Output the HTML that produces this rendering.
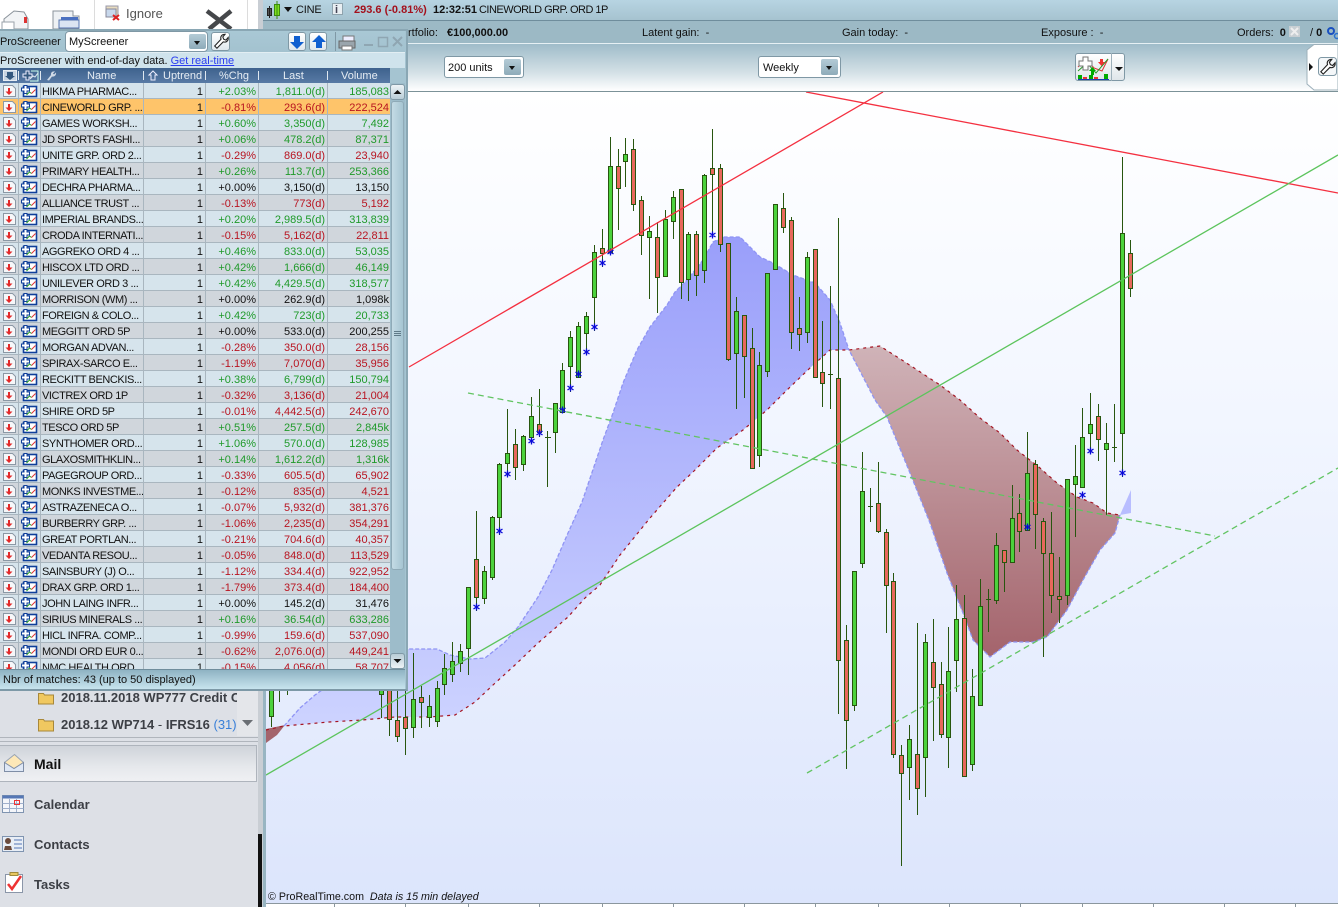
<!DOCTYPE html>
<html><head><meta charset="utf-8"><title>ProScreener</title>
<style>
*{box-sizing:border-box}
html,body{margin:0;padding:0}
body{width:1338px;height:907px;position:relative;overflow:hidden;background:#dde0e6;font:11px "Liberation Sans",sans-serif;color:#111}
.a{position:absolute}
.t{position:absolute;white-space:nowrap;line-height:14px}
.o{font-weight:bold;font-size:13px;color:#3c3f45;line-height:16px}
.sel{position:absolute;background:#fff;border:1px solid #7f98a5;border-radius:3px}
.sb{position:absolute;top:2px;bottom:2px;right:2px;width:17px;border-radius:2px;background:linear-gradient(#b4cbd6,#8eabb9)}
.sb:after{content:"";position:absolute;left:5px;top:7px;border:3.5px solid transparent;border-top:4px solid #111;border-bottom:0}
.btn{position:absolute;background:linear-gradient(#fff,#dfe8ee);border:1px solid #7f98a5;border-radius:3px}
#rows{position:absolute;left:0;top:83px;width:390px;height:586px;overflow:hidden;font-size:11px}
.r{height:16px;padding-left:41px;display:grid;grid-template-columns:103px 62px 53px 69px 62px;background:#d6e4ec;border-bottom:1px solid #a9b6bf;line-height:16px}
.r.k{background:#d0d6dc}
.r.c{background:#fec46a}
.r span{border-right:1px solid #a9b6bf;text-align:right;padding:1px 2px 0 0;white-space:nowrap;overflow:hidden}
.r span:first-child{text-align:left;padding:1px 0 0 1px;letter-spacing:-.42px}
.r span:last-child{border:0;padding:1px 1px 0 0}
.g span:nth-child(n+3){color:#1f9a2a}
.e span:nth-child(n+3){color:#b81420}
.n span:nth-child(n+3){color:#111}
</style></head>
<body>
<svg width="0" height="0" style="position:absolute"><defs>
<symbol id="wr" viewBox="0 0 20 20"><path d="M3 15.500l7-7.500c-1-3 1-5.500 4.500-5.500l-2.500 3 1 2.500 2.500 1 2.500-3c.5 3.500-2 6-5.500 5l-7 7z" fill="#fff" stroke="#222" stroke-width="1.200"/></symbol>
</defs></svg>

<!-- Outlook ribbon -->
<div class="a" style="left:0;top:0;width:258px;height:30px;background:#fff"></div>
<div class="a" style="left:94px;top:0;width:1px;height:30px;background:#dcdcdc"></div>
<div class="a" style="left:247px;top:0;width:1px;height:30px;background:#dcdcdc"></div>
<svg class="a" style="left:0;top:0" width="258" height="30">
<path d="M4 29V19l10-8 10 1 4 7v10z" fill="#f2f4f6" stroke="#8b939b"/><path d="M2 22h12v8H2z" fill="#fff" stroke="#9aa2aa"/><path d="M24 17h3v6h-3z" fill="#d33"/>
<path d="M53 29V11h20v5h6v13z" fill="#eef1f4" stroke="#8b939b"/><path d="M59 20h20v8H59z" fill="#dbe4f2" stroke="#5575b0"/><path d="M61 17h17v3H61z" fill="#4a70c0"/>
<path d="M106 6h12v10h-12z" fill="#e8dcc0" stroke="#99a"/><path d="M106 9h10v8h-10z" fill="#c8d8ec" stroke="#889"/><path d="M113 15l6 5M119 15l-6 5" stroke="#d22" stroke-width="2"/>
<path d="M207 11l24 18M231 11l-22 18" stroke="#45474a" stroke-width="4.500"/>
</svg>
<div class="t" style="left:126px;top:7px;font-size:13px;color:#555">Ignore</div>

<!-- Outlook lower left -->
<div class="a" style="left:0;top:690px;width:258px;height:217px;background:#dde0e6"></div>
<div class="a" style="left:237px;top:690px;width:21px;height:46px;background:#e4e6ea"></div>
<svg class="a" style="left:0;top:690px" width="258" height="217">
<path d="M38.500 3.500h5l1 1.500h9v9h-15z" fill="#f0c860" stroke="#a8883a"/>
<path d="M38.500 29.500h5l1 1.500h9v10h-15z" fill="#f0c860" stroke="#a8883a"/>
<path d="M242 30h11l-5.500 6z" fill="#6a6e74"/>
<path d="M0 47.500h258M0 51.500h258" stroke="#b0b5bc"/>
</svg>
<div class="t o" style="left:61px;top:690px;width:176px;overflow:hidden">2018.11.2018 WP777 Credit C</div>
<div class="t o" style="left:61px;top:717px">2018.12 WP714 <span style="font-weight:normal">-</span> IFRS16 <span style="color:#3a80d8;font-weight:normal">(31)</span></div>
<div class="a" style="left:0;top:745px;width:257px;height:37px;border:1px solid #aeb4bc;border-left:0;background:linear-gradient(#cfd3da,#e6e8ec 60%,#eff0f3)"></div>
<svg class="a" style="left:0;top:750px" width="30" height="150">
<path d="M4.500 12.500l10-8 9 8v9h-19z" fill="#fde8b8" stroke="#98a4b4"/><path d="M4.500 12.500l9.500 6 9.500-6v9h-19z" fill="#dfe8f6" stroke="#7f8ea6"/>
<path d="M2.500 45.500h21v17h-21z" fill="#f4f6fa" stroke="#7f94b0"/><path d="M2.500 45.500h21v3h-21z" fill="#5577b5"/><path d="M2.500 53.500h21M2.500 58.500h21M9.500 49v13M16.500 49v13" stroke="#a0b0cc"/><path d="M14.500 50.500h5v4h-5z" fill="none" stroke="#e33"/>
<path d="M2.500 86.500h21v15h-21z" fill="#e8eef6" stroke="#7f94b0"/><path d="M5 91a3 3 0 1 1 6 0a3 3 0 0 1-6 0zM4 100l1-4h6l1 4z" fill="#6a4a3c"/><path d="M14 90h8M14 94h8M14 98h8" stroke="#5577b5"/>
<path d="M5.500 124.500h17v18h-17z" fill="#fff" stroke="#8a96a8"/><path d="M10 122.500h8v3h-8z" fill="#e8c860" stroke="#a08a3a"/><path d="M8 134l4 5 9-13" fill="none" stroke="#e33" stroke-width="2.500"/>
</svg>
<div class="t o" style="left:34px;top:756px;color:#111;font-size:14px">Mail</div>
<div class="t o" style="left:34px;top:797px">Calendar</div>
<div class="t o" style="left:34px;top:837px">Contacts</div>
<div class="t o" style="left:34px;top:877px">Tasks</div>
<div class="a" style="left:258px;top:0;width:5px;height:907px;background:#c9ced4"></div>
<div class="a" style="left:258px;top:834px;width:4px;height:73px;background:#111"></div>

<!-- PRT window bars -->
<div class="a" style="left:263px;top:0;width:1075px;height:21px;background:linear-gradient(#b7d4e2,#a6c3d0);border-bottom:1px solid #6f8d9c"></div>
<div class="a" style="left:263px;top:21px;width:1075px;height:23px;background:#9cb9c5;border-bottom:1px solid #e6f0f4"></div>
<div class="a" style="left:263px;top:44px;width:1075px;height:48px;background:linear-gradient(#9fbcc9,#d3e0e6 60%,#fff);border-bottom:1px solid #7c9298"></div>
<svg class="a" style="left:263px;top:0" width="80" height="20">
<path d="M4.500 8.500h4v7h-4zM6.500 6v12" fill="#555" stroke="#222"/><path d="M11.500 4.500h5v11h-5zM14 1v18" fill="#7ee020" stroke="#3c8a10"/><path d="M21 7h8l-4 5z" fill="#111"/>
<rect x="69.500" y="3.500" width="10" height="11" fill="#e8eef2" stroke="#8fa3ad"/>
</svg>
<div class="t" style="left:296px;top:3px;font-size:11px;letter-spacing:-.2px">CINE</div>
<div class="t" style="left:335px;top:3px;font-size:11px;font-weight:bold;color:#445">i</div>
<div class="t" style="left:354px;top:3px;font-size:11px;font-weight:bold;color:#a3101c">293.6 (-0.81%)</div>
<div class="t" style="left:433px;top:3px;font-size:11px;font-weight:bold">12:32:51</div>
<div class="t" style="left:479px;top:3px;font-size:11px;letter-spacing:-.52px">CINEWORLD GRP. ORD 1P</div>
<div class="t" style="left:408px;top:26px;font-size:11px">rtfolio:</div>
<div class="t" style="left:447px;top:26px;font-size:11px;font-weight:bold">€100,000.00</div>
<div class="t" style="left:642px;top:26px;font-size:11px">Latent gain:&nbsp; -</div>
<div class="t" style="left:842px;top:26px;font-size:11px">Gain today:&nbsp; -</div>
<div class="t" style="left:1041px;top:26px;font-size:11px">Exposure :&nbsp; -</div>
<div class="t" style="left:1237px;top:26px;font-size:11px">Orders:&nbsp; <b>0</b></div>
<div class="t" style="left:1310px;top:26px;font-size:11px">/ <b>0</b></div>
<svg class="a" style="left:1288px;top:24px" width="50" height="18">
<rect x="1" y="2" width="11" height="11" fill="#c8cfd3"/><path d="M3 4l7 7M10 4l-7 7" stroke="#eee" stroke-width="2"/>
<circle cx="43" cy="7" r="3" fill="none" stroke="#1a50c0" stroke-width="2"/><circle cx="49" cy="12" r="2.500" fill="none" stroke="#2a70d0" stroke-width="1.500"/>
</svg>

<div class="sel" style="left:444px;top:56px;width:80px;height:22px"><div class="sb"></div></div>
<div class="t" style="left:448px;top:61px;font-size:11px">200 units</div>
<div class="sel" style="left:758px;top:56px;width:83px;height:22px"><div class="sb"></div></div>
<div class="t" style="left:763px;top:61px;font-size:11px">Weekly</div>
<div class="sel" style="left:1075px;top:53px;width:50px;height:28px;background:linear-gradient(#fff,#dfe6ea)"></div>
<svg class="a" style="left:1075px;top:53px" width="50" height="28">
<path d="M36.500 0v28" stroke="#9db0ba"/><path d="M40 14h8l-4 4z" fill="#111"/>
<path d="M3 14l8-8 8 9 8 3 6-12" fill="none" stroke="#d33" stroke-width="1"/><path d="M3 18l9-8 9 10 12-14" fill="none" stroke="#2a9a2a" stroke-width="1"/>
<path d="M4 8h4V4h5v4h4v5h-4v4H8v-4H4z" fill="#fff" stroke="#777"/>
<path d="M25 6h3v3h2l-3.500 4L23 9h2z" fill="#e33"/><path d="M14 18l3.500-4 3.500 4h-2v4h-3v-4z" fill="#0a0"/>
<path d="M3 22h4v4H3zM14 22h4v4h-4zM29 21h4v5h-4z" fill="#0a0"/><path d="M8 24h4v2H8zM19 24h4v2h-4z" fill="#e33"/><path d="M3 26.500h31" stroke="#1a3fb0"/>
</svg>
<svg class="a" style="left:1304px;top:44px" width="34" height="47">
<path d="M34 .5H10L3 6v34l7 6h24z" fill="#fff" stroke="#9db0ba"/><path d="M5 19l4 4-4 4z" fill="#111"/>
<rect x="14.500" y="13.500" width="18" height="18" rx="3" fill="#f4f7f9" stroke="#7f98a5"/><use href="#wr" x="14" y="13" width="19" height="19"/>
</svg>

<!-- Chart -->
<svg class="a" style="left:0;top:0" width="1338" height="907">
<defs>
<linearGradient id="bg" x1="0" y1="92" x2="0" y2="903" gradientUnits="userSpaceOnUse"><stop offset="0" stop-color="#fff"/><stop offset=".4" stop-color="#f2f6ff"/><stop offset="1" stop-color="#dce5fc"/></linearGradient>
<linearGradient id="bl" x1="0" y1="240" x2="0" y2="720" gradientUnits="userSpaceOnUse"><stop offset="0" stop-color="#9a9ffa"/><stop offset="1" stop-color="#ccd2ff"/></linearGradient>
<linearGradient id="rd" x1="0" y1="350" x2="0" y2="655" gradientUnits="userSpaceOnUse"><stop offset="0" stop-color="#cfb2b7"/><stop offset="1" stop-color="#a4646c"/></linearGradient>
<clipPath id="cp"><rect x="266" y="92" width="1072" height="811"/></clipPath>
</defs>
<rect x="263" y="92" width="1075" height="815" fill="#fff"/>
<rect x="266" y="92" width="1072" height="811" fill="url(#bg)"/>
<rect x="263" y="92" width="3" height="815" fill="#98b5c2"/>
<path d="M334.500 903v4M405.500 903v4M468.500 903v4M539.500 903v4M602.500 903v4M673.500 903v4M744.500 903v4M815.500 903v4M878.500 903v4M949.500 903v4M1020.500 903v4M1082.500 903v4M1153.500 903v4M1224.500 903v4M1295.500 903v4M266 903.500h1072" stroke="#8b979e" fill="none"/>
<g clip-path="url(#cp)">
<path d="M284 726L300 708 315 695 350 670 405 649 437 649 450 655 470 659 485 658 505 642 518 627 538 597 552 570 568 533 582 502 603 440 613 413 623 383 637 350 650 327 667 305 675 292 687 280 703 260 713 242 723 237 740 237 750 247 760 257 773 263 793 275 815 283 830 300 840 323 849 350 830 350 810 368 787 390 767 410 743 430 717 448 693 472 677 487 650 518 620 555 600 585 585 598 568 617 538 643 515 665 493 685 475 702 455 715 429 717 395 717 362 720 329 722z" fill="url(#bl)"/>
<path d="M849 350L880 346 905 362 940 385 960 400 980 418 1000 433 1017 450 1040 468 1057 483 1077 497 1093 503 1107 513 1120 515 1115 533 1100 550 1083 580 1067 610 1047 637 1033 642 1010 642 990 657 973 640 963 613 947 573 930 523 910 473 887 417 875 400z" fill="url(#rd)"/>
<path d="M1120 515L1131 490V513z" fill="#b8bdff"/>
<path d="M266 729L285 725 277 735 266 743z" fill="#a4646c"/>
<path d="M284 726L300 708 315 695 350 670 405 649 437 649 450 655 470 659 485 658 505 642 518 627 538 597 552 570 568 533 582 502 603 440 613 413 623 383 637 350 650 327 667 305 675 292 687 280 703 260 713 242 723 237 740 237 750 247 760 257 773 263 793 275 815 283 830 300 840 323 849 350M1120 515L1115 533 1100 550 1083 580 1067 610 1047 637 1033 642 1010 642 990 657 973 640 963 613 947 573 930 523 910 473 887 417 875 400 849 350" fill="none" stroke="#8f94f4" stroke-width="1.300" stroke-dasharray="4 2"/>
<path d="M266 730L284 726 329 722 362 720 395 717 429 717 455 715 475 702 493 685 515 665 538 643 568 617 585 598 600 585 620 555 650 518 677 487 693 472 717 448 743 430 767 410 787 390 810 368 830 350 849 350 880 346 905 362 940 385 960 400 980 418 1000 433 1017 450 1040 468 1057 483 1077 497 1093 503 1107 513 1120 515" fill="none" stroke="#a51422" stroke-width="1.200" stroke-dasharray="3 4"/>
<path stroke="#28560f" fill="none" d="M271.500 680V727M279.500 680V702M287.500 680V695M381.500 680V718M389.500 680V736M397.500 690V742M405.500 653V755M413.500 653V738M421.500 686V728M429.500 695V727M437.500 681V727M444.500 654V695M452.500 642V682M460.500 644V672M468.500 587V675M476.500 511V611M484.500 566V604M492.500 516V580M499.500 463V535M507.500 409V473M515.500 429V480M523.500 435V471M531.500 397V444M539.500 389V437M547.500 431V487M555.500 403V453M562.500 363V413M570.500 331V392M578.500 322V377M586.500 312V355M594.500 245V331M602.500 229V267M610.500 137V255M618.500 149V230M625.500 138V187M633.500 139V211M641.500 196V255M649.500 216V299M657.500 222V313M665.500 210V276M673.500 191V239M681.500 189V299M688.500 232V301M696.500 231V296M704.500 174V283M712.500 129V238M720.500 164V252M728.500 243V361M736.500 297V409M744.500 315V398M752.500 328V468M759.500 352V467M767.500 273V377M775.500 204V269M783.500 193V233M791.500 217V349M799.500 297V351M807.500 252V343M815.500 249V378M822.500 321V407M830.500 286V409M838.500 218V714M846.500 625V769M854.500 571V711M862.500 452V568M870.500 488V522M878.500 462V533M886.500 529V633M893.500 573V758M901.500 745V866M909.500 725V800M917.500 623V815M925.500 634V797M933.500 619V741M941.500 662V738M948.500 627V768M956.500 585V692M964.500 595V776M972.500 669V771M980.500 579V705M988.500 589V632M996.500 533V604M1004.500 550V592M1012.500 485V562M1019.500 494V552M1027.500 432V530M1035.500 460V549M1043.500 518V657M1051.500 512V613M1059.500 557V623M1067.500 479V605M1075.500 445V537M1082.500 408V487M1090.500 393V454M1098.500 404V461M1106.500 423V515M1114.500 404V462M1122.500 157V477M1130.500 240V297M545 437.500h6M828 374.500h5M868 506.500h5M986 599.500h5M1112 447.500h5"/>
<path stroke="#28560f" fill="#4cd23c" d="M269.500 680.500h4V716.500h-4zM379.500 680.500h4V694.500h-4zM411.500 699.500h4V727.500h-4zM427.500 706.500h4V717.500h-4zM435.500 688.500h4V721.500h-4zM442.500 668.500h4V684.500h-4zM450.500 661.500h4V674.500h-4zM458.500 651.500h4V663.500h-4zM466.500 587.500h4V648.500h-4zM482.500 571.500h4V598.500h-4zM490.500 517.500h4V577.500h-4zM497.500 464.500h4V517.500h-4zM505.500 453.500h4V463.500h-4zM521.500 436.500h4V464.500h-4zM529.500 416.500h4V437.500h-4zM553.500 403.500h4V432.500h-4zM560.500 370.500h4V412.500h-4zM568.500 337.500h4V366.500h-4zM576.500 326.500h4V377.500h-4zM584.500 316.500h4V333.500h-4zM592.500 252.500h4V297.500h-4zM608.500 166.500h4V252.500h-4zM623.500 154.500h4V161.500h-4zM647.500 231.500h4V237.500h-4zM663.500 219.500h4V276.500h-4zM671.500 197.500h4V221.500h-4zM686.500 234.500h4V279.500h-4zM702.500 175.500h4V270.500h-4zM734.500 311.500h4V353.500h-4zM757.500 365.500h4V455.500h-4zM765.500 273.500h4V371.500h-4zM773.500 204.500h4V269.500h-4zM805.500 257.500h4V332.500h-4zM852.500 571.500h4V705.500h-4zM860.500 491.500h4V563.500h-4zM907.500 739.500h4V767.500h-4zM923.500 642.500h4V757.500h-4zM946.500 671.500h4V737.500h-4zM954.500 619.500h4V660.500h-4zM970.500 696.500h4V764.500h-4zM978.500 606.500h4V705.500h-4zM994.500 545.500h4V600.500h-4zM1010.500 518.500h4V562.500h-4zM1025.500 473.500h4V530.500h-4zM1065.500 479.500h4V595.500h-4zM1073.500 476.500h4V484.500h-4zM1080.500 437.500h4V487.500h-4zM1088.500 424.500h4V433.500h-4zM1104.500 443.500h4V449.500h-4zM1120.500 233.500h4V433.500h-4z"/>
<path stroke="#28560f" fill="#e8685c" d="M387.500 680.500h4V719.500h-4zM395.500 720.500h4V736.500h-4zM403.500 717.500h4V728.500h-4zM419.500 697.500h4V702.500h-4zM474.500 559.500h4V597.500h-4zM513.500 444.500h4V467.500h-4zM537.500 424.500h4V432.500h-4zM600.500 248.500h4V253.500h-4zM616.500 166.500h4V188.500h-4zM631.500 149.500h4V204.500h-4zM639.500 200.500h4V235.500h-4zM655.500 237.500h4V277.500h-4zM679.500 189.500h4V282.500h-4zM694.500 234.500h4V275.500h-4zM710.500 168.500h4V174.500h-4zM718.500 168.500h4V244.500h-4zM726.500 243.500h4V359.500h-4zM742.500 315.500h4V356.500h-4zM750.500 348.500h4V468.500h-4zM781.500 208.500h4V227.500h-4zM789.500 220.500h4V332.500h-4zM797.500 328.500h4V334.500h-4zM813.500 249.500h4V377.500h-4zM820.500 372.500h4V383.500h-4zM836.500 378.500h4V660.500h-4zM844.500 640.500h4V720.500h-4zM876.500 503.500h4V531.500h-4zM884.500 532.500h4V585.500h-4zM891.500 581.500h4V754.500h-4zM899.500 755.500h4V773.500h-4zM915.500 754.500h4V788.500h-4zM931.500 662.500h4V687.500h-4zM939.500 684.500h4V734.500h-4zM962.500 618.500h4V776.500h-4zM1002.500 550.500h4V562.500h-4zM1017.500 513.500h4V531.500h-4zM1033.500 464.500h4V514.500h-4zM1041.500 521.500h4V553.500h-4zM1049.500 553.500h4V595.500h-4zM1057.500 596.500h4V599.500h-4zM1096.500 416.500h4V439.500h-4zM1128.500 253.500h4V288.500h-4z"/>
<path stroke="#0808d8" stroke-width="1.300" fill="none" d="M507.500 470.500v7M504.500 472l6 4M504.500 476l6-4M531.500 437.500v7M528.500 439l6 4M528.500 443l6-4M539.500 429.500v7M536.500 431l6 4M536.500 435l6-4M562.500 406.500v7M559.500 408l6 4M559.500 412l6-4M570.500 384.500v7M567.500 386l6 4M567.500 390l6-4M578.500 370.500v7M575.500 372l6 4M575.500 376l6-4M586.500 348.500v7M583.500 350l6 4M583.500 354l6-4M594.500 323.500v7M591.500 325l6 4M591.500 329l6-4M602.500 259.500v7M599.500 261l6 4M599.500 265l6-4M610.500 248.500v7M607.500 250l6 4M607.500 254l6-4M712.500 231.500v7M709.500 233l6 4M709.500 237l6-4M476.500 603.500v7M473.500 605l6 4M473.500 609l6-4M499.500 527.500v7M496.500 529l6 4M496.500 533l6-4M1027.500 523.500v7M1024.500 525l6 4M1024.500 529l6-4M1082.500 491.500v7M1079.500 493l6 4M1079.500 497l6-4M1090.500 447.500v7M1087.500 449l6 4M1087.500 453l6-4M1122.500 469.500v7M1119.500 471l6 4M1119.500 475l6-4"/>
<path d="M409 367L883 92M806 92L1338 193" stroke="#f43040" stroke-width="1.300" fill="none"/>
<path d="M266 775L1338 155" stroke="#5cc45c" stroke-width="1.300" fill="none"/>
<path d="M468 393L1215 536M807 773L1338 468" stroke="#62c462" stroke-width="1.300" stroke-dasharray="6 4" fill="none"/>
</g>
</svg>
<div class="t" style="left:268px;top:890px;font-size:10.700px">© ProRealTime.com&nbsp; <i>Data is 15 min delayed</i></div>

<!-- ProScreener panel -->
<div class="a" style="left:0;top:29px;width:408px;height:662px;background:#a5c4d1;border:2px solid #8aa7b4;border-left:0;border-bottom-color:#7d99a7"></div>
<div class="a" style="left:0;top:31px;width:405px;height:21px;background:linear-gradient(#a9c8d5,#a3c2cf)"></div>
<div class="a" style="left:0;top:52px;width:405px;height:1px;background:#e2eef3"></div>
<div class="a" style="left:0;top:53px;width:405px;height:15px;background:#cfe3ec"></div>
<div class="t" style="left:0;top:35px;font-size:11px;letter-spacing:-.1px">ProScreener</div>
<div class="sel" style="left:65px;top:31px;width:143px;height:21px;border-radius:4px"><div class="sb" style="right:1px"></div></div>
<div class="t" style="left:69px;top:35px;font-size:11px">MyScreener</div>
<div class="btn" style="left:211px;top:32px;width:19px;height:19px"></div>
<svg class="a" style="left:212px;top:32px" width="18" height="18"><use href="#wr" width="18" height="18"/></svg>
<div class="btn" style="left:288px;top:32px;width:18px;height:19px"></div>
<div class="btn" style="left:309px;top:32px;width:18px;height:19px"></div>
<svg class="a" style="left:288px;top:32px" width="120" height="20">
<path d="M6 4h6v6h4l-7 7-7-7h4z" fill="#0f5fd0"/><path d="M27 10l-4 0 7-7 7 7h-4v6h-6z" fill="#0f5fd0" transform="translate(1 0)"/>
<path d="M47.500 0v19" stroke="#7f98a5"/>
<path d="M55 4h11v5H55z" fill="#eef" stroke="#777"/><path d="M51 9h16v7H51z" fill="#9aa5ac" stroke="#666"/><path d="M54 14h10v4H54z" fill="#fff" stroke="#777"/>
<path d="M76 13h9" stroke="#8fa6b2" stroke-width="2"/><rect x="90.500" y="5.500" width="9" height="9" fill="none" stroke="#8fa6b2" stroke-width="1.500"/><path d="M105 5l9 9M114 5l-9 9" stroke="#8fa6b2" stroke-width="2"/>
</svg>
<div class="t" style="left:0;top:55px;font-size:11px;line-height:13px">ProScreener with end-of-day data. <span style="color:#2a3cf0;text-decoration:underline">Get real-time</span></div>

<!-- Table header -->
<div class="a" style="left:0;top:68px;width:390px;height:15px;background:linear-gradient(#3e628d,#587aa5)"></div>
<svg class="a" style="left:0;top:68px" width="390" height="15">
<rect x="3.500" y="2.500" width="13" height="10" fill="#c8d4e2" stroke="#e8eef4"/><path d="M7 4h6v4h2l-5 4-5-4h2z" fill="#34587f"/>
<path d="M18.500 3v9M40.500 3v9M143.500 3v9M205.500 3v9M258.500 3v9M327.500 3v9" stroke="#dfe8f0"/>
<path d="M23 6h3V3h3v3h3v3h-3v3h-3V9h-3z" fill="#34587f" stroke="#eef"/><path d="M31 3h7v10h-8" fill="none" stroke="#cfe"/><path d="M30 11l3-3 2 1 3-4" fill="none" stroke="#dfe8f0"/>
<path d="M47 12l4-5c-.5-2 1-4 4-3.500l-2 2 1 1 2-2c.5 3-2 4.500-4 4l-3 4z" fill="#d0dae6"/>
<path d="M153 3l4 4h-2v5h-4V7h-2z" fill="none" stroke="#eef"/>
</svg>
<div class="t" style="left:87px;top:69px;font-size:11px;color:#e6edf4;line-height:15px">Name</div>
<div class="t" style="left:163px;top:69px;font-size:11px;color:#e6edf4;line-height:15px">Uptrend</div>
<div class="t" style="left:219px;top:69px;font-size:11px;color:#e6edf4;line-height:15px">%Chg</div>
<div class="t" style="left:283px;top:69px;font-size:11px;color:#e6edf4;line-height:15px">Last</div>
<div class="t" style="left:341px;top:69px;font-size:11px;color:#e6edf4;line-height:15px">Volume</div>

<!-- Rows -->
<div id="rows">
<div class="r g"><span>HIKMA PHARMAC...</span><span>1</span><span>+2.03%</span><span>1,811.0(d)</span><span>185,083</span></div>
<div class="r e c"><span>CINEWORLD GRP. ...</span><span>1</span><span>-0.81%</span><span>293.6(d)</span><span>222,524</span></div>
<div class="r g"><span>GAMES WORKSH...</span><span>1</span><span>+0.60%</span><span>3,350(d)</span><span>7,492</span></div>
<div class="r g k"><span>JD SPORTS FASHI...</span><span>1</span><span>+0.06%</span><span>478.2(d)</span><span>87,371</span></div>
<div class="r e"><span>UNITE GRP. ORD 2...</span><span>1</span><span>-0.29%</span><span>869.0(d)</span><span>23,940</span></div>
<div class="r g k"><span>PRIMARY HEALTH...</span><span>1</span><span>+0.26%</span><span>113.7(d)</span><span>253,366</span></div>
<div class="r n"><span>DECHRA PHARMA...</span><span>1</span><span>+0.00%</span><span>3,150(d)</span><span>13,150</span></div>
<div class="r e k"><span>ALLIANCE TRUST ...</span><span>1</span><span>-0.13%</span><span>773(d)</span><span>5,192</span></div>
<div class="r g"><span>IMPERIAL BRANDS...</span><span>1</span><span>+0.20%</span><span>2,989.5(d)</span><span>313,839</span></div>
<div class="r e k"><span>CRODA INTERNATI...</span><span>1</span><span>-0.15%</span><span>5,162(d)</span><span>22,811</span></div>
<div class="r g"><span>AGGREKO ORD 4 ...</span><span>1</span><span>+0.46%</span><span>833.0(d)</span><span>53,035</span></div>
<div class="r g k"><span>HISCOX LTD ORD ...</span><span>1</span><span>+0.42%</span><span>1,666(d)</span><span>46,149</span></div>
<div class="r g"><span>UNILEVER ORD 3 ...</span><span>1</span><span>+0.42%</span><span>4,429.5(d)</span><span>318,577</span></div>
<div class="r n k"><span>MORRISON (WM) ...</span><span>1</span><span>+0.00%</span><span>262.9(d)</span><span>1,098k</span></div>
<div class="r g"><span>FOREIGN &amp; COLO...</span><span>1</span><span>+0.42%</span><span>723(d)</span><span>20,733</span></div>
<div class="r n k"><span>MEGGITT ORD 5P</span><span>1</span><span>+0.00%</span><span>533.0(d)</span><span>200,255</span></div>
<div class="r e"><span>MORGAN ADVAN...</span><span>1</span><span>-0.28%</span><span>350.0(d)</span><span>28,156</span></div>
<div class="r e k"><span>SPIRAX-SARCO E...</span><span>1</span><span>-1.19%</span><span>7,070(d)</span><span>35,956</span></div>
<div class="r g"><span>RECKITT BENCKIS...</span><span>1</span><span>+0.38%</span><span>6,799(d)</span><span>150,794</span></div>
<div class="r e k"><span>VICTREX ORD 1P</span><span>1</span><span>-0.32%</span><span>3,136(d)</span><span>21,004</span></div>
<div class="r e"><span>SHIRE ORD 5P</span><span>1</span><span>-0.01%</span><span>4,442.5(d)</span><span>242,670</span></div>
<div class="r g k"><span>TESCO ORD 5P</span><span>1</span><span>+0.51%</span><span>257.5(d)</span><span>2,845k</span></div>
<div class="r g"><span>SYNTHOMER ORD...</span><span>1</span><span>+1.06%</span><span>570.0(d)</span><span>128,985</span></div>
<div class="r g k"><span>GLAXOSMITHKLIN...</span><span>1</span><span>+0.14%</span><span>1,612.2(d)</span><span>1,316k</span></div>
<div class="r e"><span>PAGEGROUP ORD...</span><span>1</span><span>-0.33%</span><span>605.5(d)</span><span>65,902</span></div>
<div class="r e k"><span>MONKS INVESTME...</span><span>1</span><span>-0.12%</span><span>835(d)</span><span>4,521</span></div>
<div class="r e"><span>ASTRAZENECA O...</span><span>1</span><span>-0.07%</span><span>5,932(d)</span><span>381,376</span></div>
<div class="r e k"><span>BURBERRY GRP. ...</span><span>1</span><span>-1.06%</span><span>2,235(d)</span><span>354,291</span></div>
<div class="r e"><span>GREAT PORTLAN...</span><span>1</span><span>-0.21%</span><span>704.6(d)</span><span>40,357</span></div>
<div class="r e k"><span>VEDANTA RESOU...</span><span>1</span><span>-0.05%</span><span>848.0(d)</span><span>113,529</span></div>
<div class="r e"><span>SAINSBURY (J) O...</span><span>1</span><span>-1.12%</span><span>334.4(d)</span><span>922,952</span></div>
<div class="r e k"><span>DRAX GRP. ORD 1...</span><span>1</span><span>-1.79%</span><span>373.4(d)</span><span>184,400</span></div>
<div class="r n"><span>JOHN LAING INFR...</span><span>1</span><span>+0.00%</span><span>145.2(d)</span><span>31,476</span></div>
<div class="r g k"><span>SIRIUS MINERALS ...</span><span>1</span><span>+0.16%</span><span>36.54(d)</span><span>633,286</span></div>
<div class="r e"><span>HICL INFRA. COMP...</span><span>1</span><span>-0.99%</span><span>159.6(d)</span><span>537,090</span></div>
<div class="r e k"><span>MONDI ORD EUR 0...</span><span>1</span><span>-0.62%</span><span>2,076.0(d)</span><span>449,241</span></div>
<div class="r e"><span>NMC HEALTH ORD ...</span><span>1</span><span>-0.15%</span><span>4,056(d)</span><span>58,707</span></div>
</div>
<svg class="a" style="left:0;top:83px" width="41" height="586">
<defs><pattern id="ic" width="41" height="16" patternUnits="userSpaceOnUse">
<path d="M18.500 0v16M40.500 0v16" stroke="#a9b6bf"/>
<path d="M3.500 2.500h9l3 3v8h-12z" fill="#f6f7f9" stroke="#8b98a5"/>
<path d="M8 5h2v3.500h2.500L9 12 5.500 8.500H8z" fill="#e22a2a"/>
<rect x="23.500" y="3.500" width="13" height="10" fill="#fff" stroke="#0f3f9a" stroke-width="1.600"/>
<path d="M21.500 5h2.500V2.500h3V5h2.500v3H27v2.500h-3V8h-2.500z" fill="#fff" stroke="#0f3f9a"/>
<path d="M26.500 12l3-3 2 1.500" fill="none" stroke="#2aa02a"/><path d="M31.500 10.500l4-4" fill="none" stroke="#d33"/>
</pattern></defs>
<rect width="41" height="586" fill="url(#ic)"/>
</svg>

<!-- Scrollbar -->
<div class="a" style="left:390px;top:83px;width:15px;height:587px;background:#9dbcca"></div>
<div class="a" style="left:390px;top:84px;width:15px;height:16px;background:linear-gradient(#eef3f6,#b8cdd7);border:1px solid #7f98a5;border-radius:3px"></div>
<svg class="a" style="left:390px;top:84px" width="15" height="16"><path d="M3.500 10L7.500 6l4 4z" fill="#111"/></svg>
<div class="a" style="left:391px;top:101px;width:13px;height:469px;background:linear-gradient(90deg,#c4dbe5,#a6c5d2);border:1px solid #8faab7;border-radius:3px"></div>
<svg class="a" style="left:391px;top:330px" width="13" height="9"><path d="M3 1.500h7M3 3.500h7M3 5.500h7" stroke="#5f7a88"/></svg>
<div class="a" style="left:390px;top:653px;width:15px;height:16px;background:linear-gradient(#b8cdd7,#eef3f6);border:1px solid #7f98a5;border-radius:3px"></div>
<svg class="a" style="left:390px;top:653px" width="15" height="16"><path d="M3.500 6l4 4 4-4z" fill="#111"/></svg>

<!-- Status -->
<div class="a" style="left:0;top:669px;width:405px;height:20px;background:linear-gradient(#8fb3c3,#c8e4ee);border-top:1px solid #6f8d9c"></div>
<div class="t" style="left:3px;top:673px;font-size:11px">Nbr of matches: 43 (up to 50 displayed)</div>
</body></html>
